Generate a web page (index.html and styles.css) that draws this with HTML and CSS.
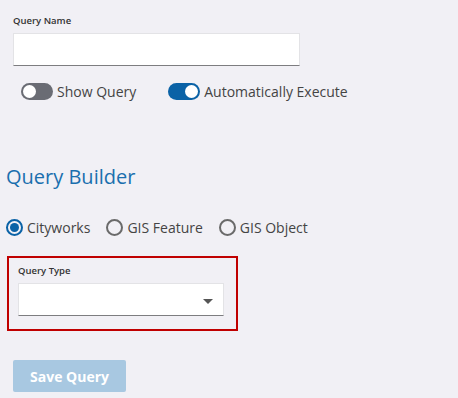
FILE: index.html
```html
<!DOCTYPE html>
<html>
<head>
    <title>Query Editor</title>
    <link rel="stylesheet" href="styles.css">
</head>
<body>
    <div class="panel">
        <div class="field name-field">
            <label class="field-label">Query Name</label>
            <div class="text-input"></div>
        </div>

        <div class="toggles">
            <div class="toggle-item">
                <span class="toggle"><span class="knob"></span></span>
                <span>Show Query</span>
            </div>
            <div class="toggle-item">
                <span class="toggle on"><span class="knob"></span></span>
                <span>Automatically Execute</span>
            </div>
        </div>

        <h2 class="section-title">Query Builder</h2>

        <div class="radios">
            <div class="radio-item"><span class="radio checked"></span><span>Cityworks</span></div>
            <div class="radio-item"><span class="radio"></span><span>GIS Feature</span></div>
            <div class="radio-item"><span class="radio"></span><span>GIS Object</span></div>
        </div>

        <div class="type-box">
            <label class="field-label">Query Type</label>
            <div class="select-input"><span class="caret"></span></div>
        </div>

        <button class="save-btn" disabled>Save Query</button>
    </div>
</body>
</html>
```

FILE: styles.css
```css
body {
    margin: 0;
    background-color: #f1f0f5;
    font-family: 'Open Sans', sans-serif;
    color: #333333;
}

.panel {
    padding: 14px 0 0 6px;
}

.field-label {
    display: block;
    font-size: 9.5px;
    font-weight: 600;
    color: #333333;
    margin-bottom: 6px;
}

.name-field {
    margin-left: 7px;
}

.text-input,
.select-input {
    height: 31px;
    background-color: #ffffff;
    border: 1px solid #e3e3e6;
    border-bottom: 1px solid #7d7d80;
    box-sizing: content-box;
}

.text-input {
    width: 285px;
}

.toggles {
    display: flex;
    gap: 32px;
    margin: 16px 0 0 15px;
    font-size: 14px;
    color: #444444;
}

.toggle-item {
    display: flex;
    align-items: center;
    gap: 4px;
}

.toggle {
    width: 32px;
    height: 17px;
    border-radius: 9px;
    background-color: #6a6c74;
    position: relative;
    display: inline-block;
}

.knob {
    position: absolute;
    top: 2px;
    left: 2px;
    width: 13px;
    height: 13px;
    border-radius: 50%;
    background-color: #ffffff;
}

.toggle.on {
    background-color: #0a62a6;
}

.toggle.on .knob {
    left: 17px;
}

.section-title {
    font-size: 20px;
    font-weight: 400;
    color: #1a6fae;
    margin: 62px 0 0 0;
}

.radios {
    display: flex;
    gap: 16px;
    margin-top: 28px;
    font-size: 14px;
    color: #444444;
}

.radio-item {
    display: flex;
    align-items: center;
    gap: 4px;
}

.radio {
    width: 13px;
    height: 13px;
    border: 2px solid #6a6a6a;
    border-radius: 50%;
    position: relative;
}

.radio.checked {
    border-color: #0a62a6;
}

.radio.checked::after {
    content: '';
    position: absolute;
    top: 2px;
    left: 2px;
    width: 9px;
    height: 9px;
    border-radius: 50%;
    background-color: #0a62a6;
}

.type-box {
    width: 206px;
    margin: 19px 0 0 1px;
    padding: 6px 12px 13px 9px;
    border: 2px solid #c00000;
}

.select-input {
    position: relative;
}

.caret {
    position: absolute;
    right: 10px;
    top: 15px;
    width: 0;
    height: 0;
    border-left: 5px solid transparent;
    border-right: 5px solid transparent;
    border-top: 5px solid #555555;
}

.save-btn {
    display: block;
    margin: 29px 0 0 7px;
    width: 113px;
    height: 32px;
    border: none;
    border-radius: 2px;
    background-color: #a8c8e1;
    color: #ffffff;
    font-family: 'Open Sans', sans-serif;
    font-size: 14px;
    font-weight: 700;
}
```
